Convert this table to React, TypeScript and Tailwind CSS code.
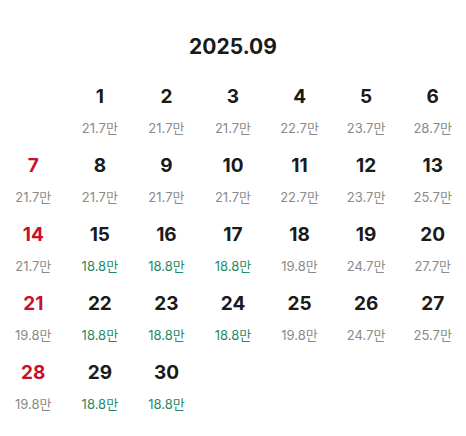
import React from 'react';

type Tone = 'gray' | 'green';

const PRICES: Record<number, [string, Tone]> = {
  1: ['21.7만', 'gray'], 2: ['21.7만', 'gray'], 3: ['21.7만', 'gray'], 4: ['22.7만', 'gray'],
  5: ['23.7만', 'gray'], 6: ['28.7만', 'gray'], 7: ['21.7만', 'gray'], 8: ['21.7만', 'gray'],
  9: ['21.7만', 'gray'], 10: ['21.7만', 'gray'], 11: ['22.7만', 'gray'], 12: ['23.7만', 'gray'],
  13: ['25.7만', 'gray'], 14: ['21.7만', 'gray'], 15: ['18.8만', 'green'], 16: ['18.8만', 'green'],
  17: ['18.8만', 'green'], 18: ['19.8만', 'gray'], 19: ['24.7만', 'gray'], 20: ['27.7만', 'gray'],
  21: ['19.8만', 'gray'], 22: ['18.8만', 'green'], 23: ['18.8만', 'green'], 24: ['18.8만', 'green'],
  25: ['19.8만', 'gray'], 26: ['24.7만', 'gray'], 27: ['25.7만', 'gray'], 28: ['19.8만', 'gray'],
  29: ['18.8만', 'green'], 30: ['18.8만', 'green'],
};

// Sept 2025 starts on a Monday, week starts Sunday
const CELLS: (number | null)[] = [null, ...Array.from({ length: 30 }, (_, i) => i + 1)];

export default function App() {
  return (
    <div
      className="w-[466px] h-[436px] bg-white overflow-hidden"
      style={{ fontFamily: 'Inter, "Noto Sans CJK KR", sans-serif' }}
    >
      {/* ── Month header ── */}
      <h1 className="pt-[34px] text-center text-[21px] leading-[26px] font-bold text-[#1a1a1a]">
        2025.09
      </h1>

      {/* ── Day grid ── */}
      <div className="grid grid-cols-7 mt-[25px]">
        {CELLS.map((day, idx) => {
          if (day === null) return <div key={`empty-${idx}`} className="h-[69px]" />;
          const isSunday = idx % 7 === 0;
          const [price, tone] = PRICES[day];
          return (
            <div key={day} className="h-[69px] flex flex-col items-center">
              <span
                className={`text-[19px] leading-[24px] font-bold ${
                  isSunday ? 'text-[#c8102e]' : 'text-[#1a1a1a]'
                }`}
              >
                {day}
              </span>
              <span
                className={`mt-[10px] text-[13px] leading-[18px] ${
                  tone === 'green' ? 'text-[#1e8a6a]' : 'text-[#8a8a8a]'
                }`}
              >
                {price}
              </span>
            </div>
          );
        })}
      </div>
    </div>
  );
}
